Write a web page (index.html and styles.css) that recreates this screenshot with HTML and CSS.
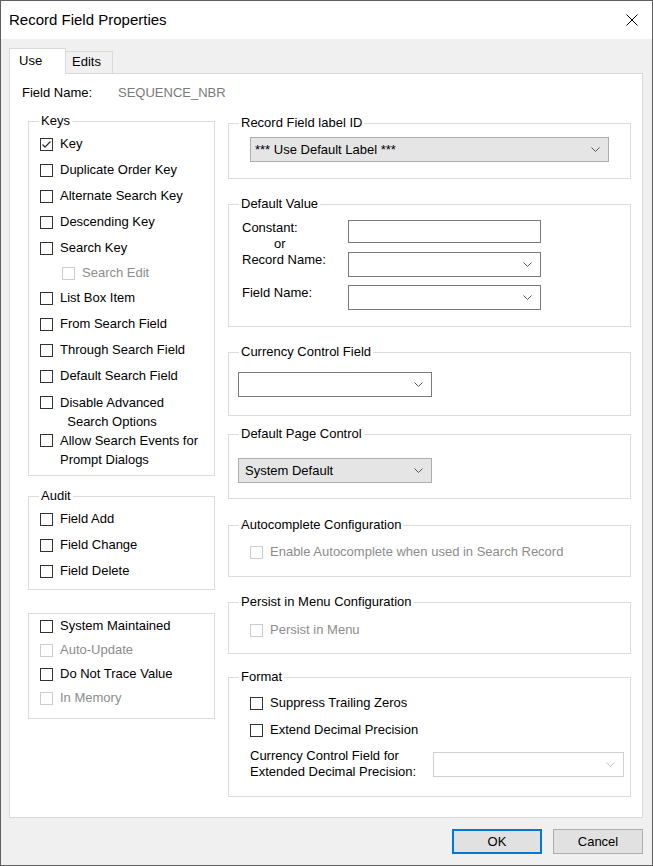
FILE: index.html
```html
<!DOCTYPE html>
<html>
<head>
<meta charset="utf-8">
<title>Record Field Properties</title>
<link rel="stylesheet" href="styles.css">
</head>
<body>
<div class="window">
  <div class="titlebar">
    <span class="title">Record Field Properties</span>
    <svg class="close" width="12" height="12" viewBox="0 0 12 12"><path d="M0.5 0.5 L11.5 11.5 M11.5 0.5 L0.5 11.5" stroke="#000" stroke-width="1" fill="none"/></svg>
  </div>
  <div class="client">
    <div class="tabs">
      <div class="tab tab-use active">Use</div>
      <div class="tab tab-edits">Edits</div>
    </div>
    <div class="panel">
      <div class="field-name">
        <span class="fn-label">Field Name:</span>
        <span class="fn-value">SEQUENCE_NBR</span>
      </div>
      <div class="columns">
        <div class="col-left">
          <div class="group g-keys">
            <div class="group-title">Keys</div>
            <div class="rows">
              <div class="cb-row"><span class="cb checked"><svg width="11" height="11" viewBox="0 0 11 11"><polyline points="1.5,5.5 4,8 9.5,2.5" fill="none" stroke="#333" stroke-width="1.3"/></svg></span><span>Key</span></div>
              <div class="cb-row"><span class="cb"></span><span>Duplicate Order Key</span></div>
              <div class="cb-row"><span class="cb"></span><span>Alternate Search Key</span></div>
              <div class="cb-row"><span class="cb"></span><span>Descending Key</span></div>
              <div class="cb-row"><span class="cb"></span><span>Search Key</span></div>
              <div class="cb-row short sub disabled"><span class="cb"></span><span>Search Edit</span></div>
              <div class="cb-row"><span class="cb"></span><span>List Box Item</span></div>
              <div class="cb-row"><span class="cb"></span><span>From Search Field</span></div>
              <div class="cb-row"><span class="cb"></span><span>Through Search Field</span></div>
              <div class="cb-row"><span class="cb"></span><span>Default Search Field</span></div>
              <div class="cb-row multi first-multi"><span class="cb"></span><span class="center">Disable Advanced<br>Search Options</span></div>
              <div class="cb-row multi"><span class="cb"></span><span>Allow Search Events for<br>Prompt Dialogs</span></div>
            </div>
          </div>
          <div class="group g-audit">
            <div class="group-title">Audit</div>
            <div class="rows">
              <div class="cb-row"><span class="cb"></span><span>Field Add</span></div>
              <div class="cb-row"><span class="cb"></span><span>Field Change</span></div>
              <div class="cb-row"><span class="cb"></span><span>Field Delete</span></div>
            </div>
          </div>
          <div class="group g-misc">
            <div class="cb-row short"><span class="cb"></span><span>System Maintained</span></div>
            <div class="cb-row short disabled"><span class="cb"></span><span>Auto-Update</span></div>
            <div class="cb-row short"><span class="cb"></span><span>Do Not Trace Value</span></div>
            <div class="cb-row short disabled"><span class="cb"></span><span>In Memory</span></div>
          </div>
        </div>
        <div class="col-right">
          <div class="group g-label">
            <div class="group-title">Record Field label ID</div>
            <div class="combo gray wide">
              <span>*** Use Default Label ***</span>
              <svg class="chev" width="9" height="5" viewBox="0 0 9 5"><polyline points="0.5,0.5 4.5,4.5 8.5,0.5" fill="none" stroke="#555" stroke-width="1"/></svg>
            </div>
          </div>
          <div class="group g-default">
            <div class="group-title">Default Value</div>
            <div class="dv">
              <div class="dv-labels">
                <div>Constant:</div>
                <div class="dv-or">or</div>
                <div>Record Name:</div>
                <div class="dv-field">Field Name:</div>
              </div>
              <div class="dv-controls">
                <div class="textbox"></div>
                <div class="combo dv-combo">
                  <span></span>
                  <svg class="chev" width="9" height="5" viewBox="0 0 9 5"><polyline points="0.5,0.5 4.5,4.5 8.5,0.5" fill="none" stroke="#555" stroke-width="1"/></svg>
                </div>
                <div class="combo dv-combo">
                  <span></span>
                  <svg class="chev" width="9" height="5" viewBox="0 0 9 5"><polyline points="0.5,0.5 4.5,4.5 8.5,0.5" fill="none" stroke="#555" stroke-width="1"/></svg>
                </div>
              </div>
            </div>
          </div>
          <div class="group g-currency">
            <div class="group-title">Currency Control Field</div>
            <div class="combo mid">
              <span></span>
              <svg class="chev" width="9" height="5" viewBox="0 0 9 5"><polyline points="0.5,0.5 4.5,4.5 8.5,0.5" fill="none" stroke="#555" stroke-width="1"/></svg>
            </div>
          </div>
          <div class="group g-page">
            <div class="group-title">Default Page Control</div>
            <div class="combo gray mid">
              <span>System Default</span>
              <svg class="chev" width="9" height="5" viewBox="0 0 9 5"><polyline points="0.5,0.5 4.5,4.5 8.5,0.5" fill="none" stroke="#555" stroke-width="1"/></svg>
            </div>
          </div>
          <div class="group g-auto">
            <div class="group-title">Autocomplete Configuration</div>
            <div class="cb-row r-row disabled"><span class="cb"></span><span>Enable Autocomplete when used in Search Record</span></div>
          </div>
          <div class="group g-persist">
            <div class="group-title">Persist in Menu Configuration</div>
            <div class="cb-row r-row disabled"><span class="cb"></span><span>Persist in Menu</span></div>
          </div>
          <div class="group g-format">
            <div class="group-title">Format</div>
            <div class="cb-row r-row fmt-1"><span class="cb"></span><span>Suppress Trailing Zeros</span></div>
            <div class="cb-row r-row fmt-2"><span class="cb"></span><span>Extend Decimal Precision</span></div>
            <div class="fmt-currency">
              <div class="fmt-label">Currency Control Field for<br>Extended Decimal Precision:</div>
              <div class="combo disabled fmt-combo">
                <span></span>
                <svg class="chev" width="9" height="5" viewBox="0 0 9 5"><polyline points="0.5,0.5 4.5,4.5 8.5,0.5" fill="none" stroke="#c4c4c4" stroke-width="1"/></svg>
              </div>
            </div>
          </div>
        </div>
      </div>
    </div>
    <div class="buttons">
      <button class="btn btn-ok">OK</button>
      <button class="btn">Cancel</button>
    </div>
  </div>
</div>
</body>
</html>
```
FILE: styles.css
```css
* { box-sizing: border-box; }
html, body { margin: 0; padding: 0; background: #f0f0f0; }
body {
  font-family: "Liberation Sans", Arial, sans-serif;
  font-size: 13px;
  color: #000;
}
.window {
  width: 653px;
  height: 866px;
  border: 1px solid #5f5f5f;
  display: flex;
  flex-direction: column;
  background: #f0f0f0;
}
.titlebar {
  flex: none;
  height: 38px;
  background: #fff;
  display: flex;
  align-items: center;
  justify-content: space-between;
  padding: 0 14px 0 8px;
}
.title { font-size: 15px; line-height: 18px; }
.close { display: block; }

.client {
  flex: 1;
  display: flex;
  flex-direction: column;
  padding: 9px 9px 0 8px;
}
.tabs {
  display: flex;
  align-items: flex-end;
  height: 25px;
}
.tab {
  border: 1px solid #d9d9d9;
  border-bottom: none;
  background: #f0f0f0;
  line-height: 16px;
}
.tab-use {
  width: 57px;
  height: 26px;
  padding: 4px 0 0 9px;
  background: #fff;
  margin-bottom: -1px;
  position: relative;
  z-index: 1;
}
.tab-edits {
  width: 48px;
  height: 22px;
  padding: 2px 0 0 6px;
  margin-left: -1px;
}
.panel {
  width: 634px;
  height: 745px;
  background: #fff;
  border: 1px solid #d9d9d9;
}
.field-name {
  display: flex;
  margin: 11px 0 0 12px;
  line-height: 16px;
}
.fn-label { width: 96px; }
.fn-value { color: #7a7a7a; }

.columns {
  display: flex;
  gap: 13px;
  margin: 20px 0 0 18px;
}
.col-left { width: 187px; }
.col-right { width: 403px; padding-top: 2px; }

.group { border: 1px solid #dcdcdc; }
.group-title {
  margin: -9px 0 0 10px;
  padding: 0 2px;
  width: max-content;
  background: #fff;
  line-height: 16px;
}

/* checkbox rows */
.cb-row {
  display: flex;
  align-items: center;
  height: 26px;
  padding-left: 11px;
  line-height: 16px;
  white-space: nowrap;
}
.cb {
  flex: none;
  width: 13px;
  height: 13px;
  border: 1px solid #333;
  background: #fff;
  margin-right: 7px;
  display: flex;
  align-items: center;
  justify-content: center;
}
.cb svg { display: block; }
.cb-row.short { height: 24px; }
.cb-row.sub { padding-left: 33px; }
.cb-row.disabled { color: #8c8c8c; }
.cb-row.disabled .cb { border-color: #cccccc; }
.cb-row.multi {
  height: auto;
  align-items: flex-start;
  line-height: 19px;
}
.cb-row.multi .cb { margin-top: 3px; }
.cb-row.first-multi { margin-top: 4px; }
.center { text-align: center; }

.g-keys .rows { padding: 2px 0 6px; }
.g-audit { margin-top: 20px; }
.g-audit .rows { padding: 2px 0 5px; }
.g-misc { margin-top: 23px; padding: 0 0 8px; }

/* combos */
.combo {
  display: flex;
  align-items: center;
  justify-content: space-between;
  height: 25px;
  border: 1px solid #7a7a7a;
  background: #fff;
  padding: 0 8px 0 5px;
  white-space: nowrap;
}
.combo.gray { background: #e5e5e5; border-color: #adadad; }
.combo.disabled { border-color: #d0d0d0; }
.chev { display: block; flex: none; }
.textbox {
  height: 23px;
  border: 1px solid #7a7a7a;
  background: #fff;
}

.g-label { padding-bottom: 16px; }
.g-label .combo.wide { width: 359px; margin: 6px 0 0 21px; padding-left: 4px; }

.g-default { margin-top: 25px; padding-bottom: 16px; }
.dv { display: flex; margin-top: 8px; }
.dv-labels { width: 119px; padding-left: 13px; line-height: 16px; }
.dv-or { padding-left: 32px; }
.dv-field { margin-top: 17px; }
.dv-controls { width: 193px; }
.dv-combo { margin-top: 9px; }
.dv-combo + .dv-combo { margin-top: 8px; }

.g-currency { margin-top: 25px; padding-bottom: 18px; }
.combo.mid { width: 194px; margin: 12px 0 0 9px; }
.g-page { margin-top: 18px; padding-bottom: 15px; }
.g-page .combo.mid { margin-top: 16px; padding-left: 6px; }

.cb-row.r-row { height: 20px; padding-left: 21px; }
.g-auto { margin-top: 26px; padding-bottom: 14px; }
.g-auto .r-row { margin-top: 9px; }
.g-persist { margin-top: 25px; padding-bottom: 13px; }
.g-persist .r-row { margin-top: 10px; }
.g-format { margin-top: 23px; padding-bottom: 16px; }
.fmt-1 { margin-top: 8px; }
.fmt-2 { margin-top: 7px; }
.fmt-currency {
  display: flex;
  align-items: center;
  margin-top: 8px;
  padding-left: 21px;
  height: 32px;
}
.fmt-label { width: 183px; line-height: 16px; }
.fmt-combo { width: 191px; }

.buttons {
  display: flex;
  justify-content: flex-end;
  gap: 11px;
  margin-top: 11px;
}
.btn {
  width: 90px;
  height: 25px;
  padding: 0;
  background: #e1e1e1;
  border: 1px solid #adadad;
  font-family: "Liberation Sans", Arial, sans-serif;
  font-size: 13px;
  color: #000;
}
.btn-ok { border: 2px solid #0078d7; }
```
